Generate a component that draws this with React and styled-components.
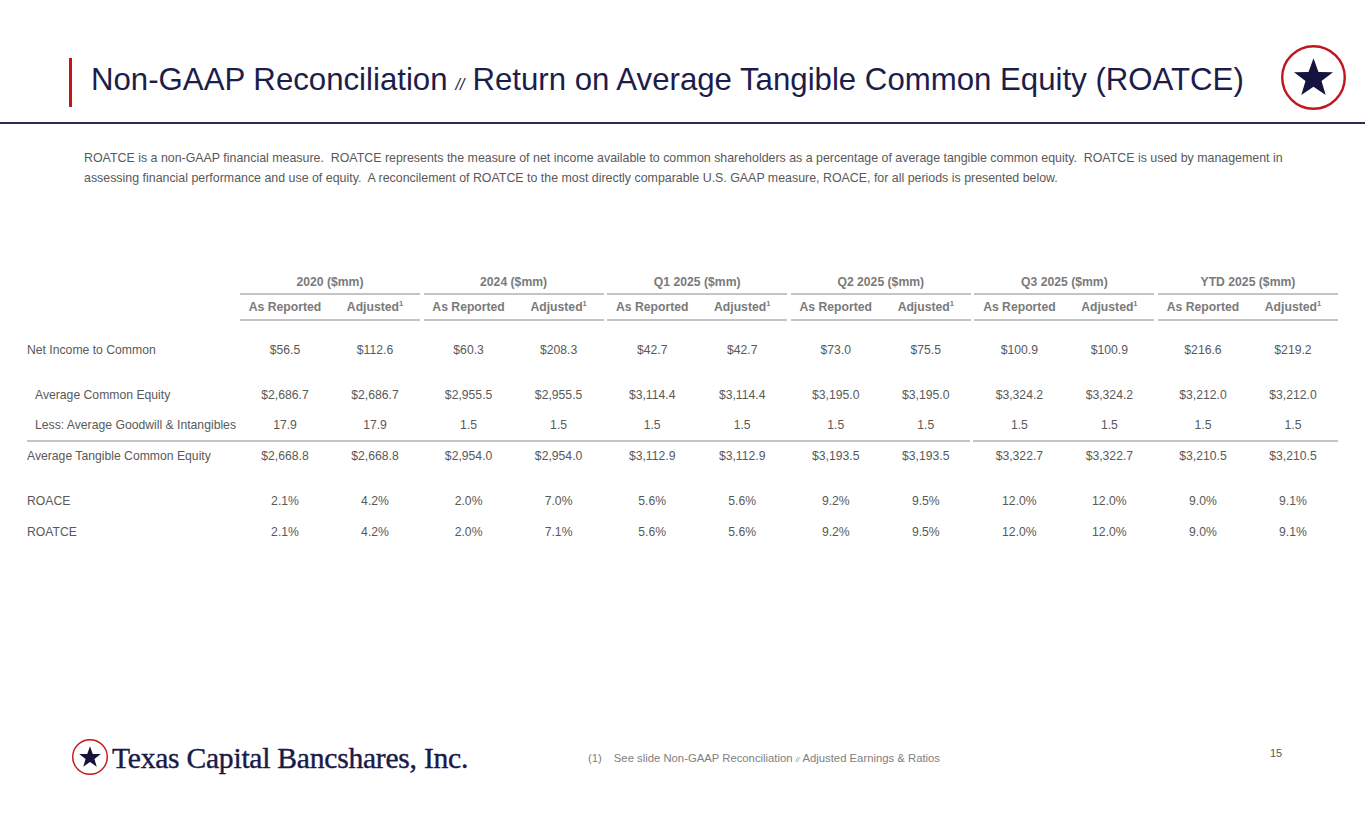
import React from "react";
import styled, { createGlobalStyle } from "styled-components";

const navy = "#1d1d4b";
const red = "#c3161c";
const ruleGray = "#c4c4c4";

const GlobalStyle = createGlobalStyle`
  html, body {
    margin: 0;
    padding: 0;
    background: #fff;
  }
  body {
    font-family: "Liberation Sans", Arial, sans-serif;
  }
`;

const Page = styled.div`
  width: 1365px;
  height: 829px;
  display: flex;
  flex-direction: column;
  background: #fff;
  overflow: hidden;
`;

const Header = styled.header`
  height: 124px;
  border-bottom: 2px solid #2b2b52;
  display: flex;
  align-items: flex-start;
  padding-left: 69px;
  padding-right: 19px;
  box-sizing: border-box;
`;

const RedBar = styled.div`
  width: 3px;
  height: 49px;
  background: ${red};
  margin-top: 58px;
`;

const Title = styled.h1`
  margin: 62px 0 0 19px;
  font-size: 31.2px;
  line-height: 36px;
  font-weight: 400;
  color: ${navy};
  white-space: nowrap;
  flex: 1;
`;

const Slash = styled.span`
  font-size: ${(p) => p.$size || 16}px;
  font-style: italic;
  margin: 0 ${(p) => p.$space || 8}px;
`;

const Logo = styled.div`
  margin-top: 45px;
  line-height: 0;
`;

const Intro = styled.p`
  margin: 24px 0 0 84px;
  width: 1210px;
  font-size: 12.4px;
  line-height: 20px;
  color: #595959;
`;

const Table = styled.div`
  margin: 82px 0 0 27px;
  width: 1311px;
  display: flex;
  flex-direction: column;
`;

const Row = styled.div`
  display: flex;
  height: ${(p) => p.$h || 31}px;
  margin-top: ${(p) => p.$top || 0}px;
  align-items: stretch;
`;

const Label = styled.div`
  width: 213px;
  flex: none;
  display: flex;
  align-items: center;
  padding-left: ${(p) => (p.$indent ? 8 : 0)}px;
  box-sizing: border-box;
  font-size: 12.2px;
  color: #595959;
  white-space: nowrap;
`;

const Groups = styled.div`
  flex: 1;
  display: flex;
  gap: 3.6px;
`;

const Group = styled.div`
  width: 180px;
  flex: none;
  display: flex;
  align-items: center;
  border-bottom: ${(p) => (p.$rule ? `2px solid ${ruleGray}` : "none")};
  box-sizing: border-box;
`;

const HeadCell = styled.div`
  flex: 1;
  text-align: center;
  font-size: 12.2px;
  font-weight: 700;
  color: #7a7a7a;
  white-space: nowrap;
`;

const Cell = styled.div`
  flex: 1;
  text-align: center;
  font-size: 12.2px;
  color: #595959;
  white-space: nowrap;
`;

const Sup = styled.sup`
  font-size: 7.5px;
  vertical-align: 5px;
  line-height: 0;
`;

const Rule = styled.div`
  display: flex;
  gap: 3px;
  height: 2px;
`;

const RuleSeg = styled.div`
  height: 2px;
  background: ${ruleGray};
  width: ${(p) => (p.$w ? `${p.$w}px` : "auto")};
  flex: ${(p) => (p.$w ? "none" : 1)};
`;

const Footer = styled.footer`
  margin-top: auto;
  margin-bottom: 52px;
  height: 40px;
  display: grid;
  grid-template-columns: 516px 682px 1fr;
  align-items: center;
  padding-left: 72px;
`;

const Brand = styled.div`
  display: flex;
  align-items: center;
  gap: 4px;
`;

const BrandName = styled.span`
  font-family: "Liberation Serif", "Times New Roman", serif;
  font-size: 29.6px;
  color: #1a1a47;
  letter-spacing: -0.25px;
  -webkit-text-stroke: 0.4px #1a1a47;
  white-space: nowrap;
  margin-top: 2px;
`;

const Note = styled.div`
  font-size: 11.3px;
  color: #808080;
  white-space: nowrap;
  margin-top: 1px;
`;

const NoteNum = styled.span`
  margin-right: 12px;
`;

const PageNum = styled.div`
  font-size: 11px;
  color: #595959;
  margin-top: -8px;
`;

const StarBadge = ({ size, stroke }) => (
  <svg width={size} height={size} viewBox="0 0 64 64">
    <circle cx="32" cy="32" r={32 - stroke / 2} fill="#fff" stroke={red} strokeWidth={stroke} />
    <polygon
      points="32,13 36.9,26.6 51.2,26.8 39.9,35.5 44,49.3 32,41 20,49.3 24.1,35.5 12.8,26.8 27.1,26.6"
      fill="#14143f"
    />
  </svg>
);

const groups = ["2020 ($mm)", "2024 ($mm)", "Q1 2025 ($mm)", "Q2 2025 ($mm)", "Q3 2025 ($mm)", "YTD 2025 ($mm)"];

const rows = [
  { label: "Net Income to Common", top: 13, values: ["$56.5", "$112.6", "$60.3", "$208.3", "$42.7", "$42.7", "$73.0", "$75.5", "$100.9", "$100.9", "$216.6", "$219.2"] },
  { label: "Average Common Equity", indent: true, top: 14, values: ["$2,686.7", "$2,686.7", "$2,955.5", "$2,955.5", "$3,114.4", "$3,114.4", "$3,195.0", "$3,195.0", "$3,324.2", "$3,324.2", "$3,212.0", "$3,212.0"] },
  { label: "Less: Average Goodwill & Intangibles", indent: true, h: 30, values: ["17.9", "17.9", "1.5", "1.5", "1.5", "1.5", "1.5", "1.5", "1.5", "1.5", "1.5", "1.5"], rule: true },
  { label: "Average Tangible Common Equity", h: 28, values: ["$2,668.8", "$2,668.8", "$2,954.0", "$2,954.0", "$3,112.9", "$3,112.9", "$3,193.5", "$3,193.5", "$3,322.7", "$3,322.7", "$3,210.5", "$3,210.5"] },
  { label: "ROACE", top: 15, values: ["2.1%", "4.2%", "2.0%", "7.0%", "5.6%", "5.6%", "9.2%", "9.5%", "12.0%", "12.0%", "9.0%", "9.1%"] },
  { label: "ROATCE", values: ["2.1%", "4.2%", "2.0%", "7.1%", "5.6%", "5.6%", "9.2%", "9.5%", "12.0%", "12.0%", "9.0%", "9.1%"] },
];

const App = () => (
  <Page>
    <GlobalStyle />
    <Header>
      <RedBar />
      <Title>
        Non-GAAP Reconciliation<Slash>//</Slash>Return on Average Tangible Common Equity (ROATCE)
      </Title>
      <Logo>
        <StarBadge size={65} stroke={2.4} />
      </Logo>
    </Header>

    <Intro>
      ROATCE is a non-GAAP financial measure.&nbsp; ROATCE represents the measure of net income available to common
      shareholders as a percentage of average tangible common equity.&nbsp; ROATCE is used by management in assessing
      financial performance and use of equity.&nbsp; A reconcilement of ROATCE to the most directly comparable U.S. GAAP
      measure, ROACE, for all periods is presented below.
    </Intro>

    <Table>
      <Row $h={25}>
        <Label />
        <Groups>
          {groups.map((g) => (
            <Group key={g} $rule>
              <HeadCell>{g}</HeadCell>
            </Group>
          ))}
        </Groups>
      </Row>
      <Row $h={26}>
        <Label />
        <Groups>
          {groups.map((g) => (
            <Group key={g} $rule>
              <HeadCell>As Reported</HeadCell>
              <HeadCell>
                Adjusted<Sup>1</Sup>
              </HeadCell>
            </Group>
          ))}
        </Groups>
      </Row>
      {rows.map((r) => (
        <React.Fragment key={r.label}>
          <Row $h={r.h} $top={r.top}>
            <Label $indent={r.indent}>{r.label}</Label>
            <Groups>
              {groups.map((g, i) => (
                <Group key={g}>
                  <Cell>{r.values[i * 2]}</Cell>
                  <Cell>{r.values[i * 2 + 1]}</Cell>
                </Group>
              ))}
            </Groups>
          </Row>
          {r.rule && (
            <Rule>
              <RuleSeg $w={943} />
              <RuleSeg />
            </Rule>
          )}
        </React.Fragment>
      ))}
    </Table>

    <Footer>
      <Brand>
        <StarBadge size={36} stroke={2.6} />
        <BrandName>Texas Capital Bancshares, Inc.</BrandName>
      </Brand>
      <Note>
        <NoteNum>(1)</NoteNum>See slide Non-GAAP Reconciliation<Slash $size={7} $space={3}>//</Slash>Adjusted Earnings &amp; Ratios
      </Note>
      <PageNum>15</PageNum>
    </Footer>
  </Page>
);

export default App;
